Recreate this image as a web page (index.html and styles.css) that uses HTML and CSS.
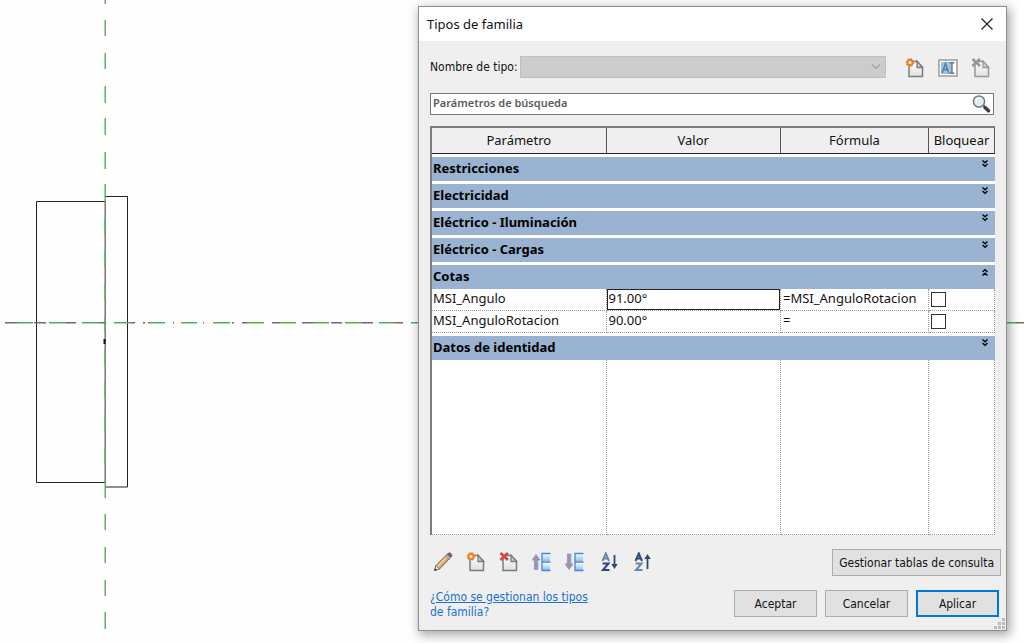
FILE: index.html
```html
<!DOCTYPE html>
<html lang="es">
<head>
<meta charset="utf-8">
<title>Tipos de familia</title>
<link rel="stylesheet" href="styles.css">
</head>
<body>
<svg class="drawing" aria-hidden="true">
  <path class="edge" d="M105 201.500H36.500V482.500H105M105 196.500H127.500V487H105"/>
  <path class="hidden-line" d="M105.200 201V482"/>
  <path class="plane" d="M105.200 0V4M105.200 20V36M105.200 53V69M105.200 86V103M105.200 118V135M105.200 152V169M105.200 184V201M105.200 218V234M105.200 250V267M105.200 283V300M105.200 317V333M105.200 349V366M105.200 382V398M105.200 415V431M105.200 448V464M105.200 481V498M105.200 514V530M105.200 547V563M105.200 580V596M105.200 612V629"/>
  <path class="axis" d="M5 322.800H17M34 322.800H46M66 322.800H76M99 322.800H105M131 322.800H135M143 322.800H145M173 322.800H174M203 322.800H204M232 322.800H234M242 322.800H247M272 322.800H280M302 322.800H313M331 322.800H342M362 322.800H373M395 322.800H403M1016 322.800H1024"/>
  <path class="plane" d="M17 322.800H33M49 322.800H66M82 322.800H99M114 322.800H131M148 322.800H165M181 322.800H197M213 322.800H230M247 322.800H264M280 322.800H296M313 322.800H329M345 322.800H362M379 322.800H395M411 322.800H418M1006 322.800H1016"/>
  <path class="mark" d="M104.500 339V344"/>
</svg>

<svg class="defs" aria-hidden="true">
  <defs>
    <linearGradient id="sheet" x1="0" y1="0" x2="0" y2="1">
      <stop offset="0" stop-color="#ffffff"/><stop offset="1" stop-color="#dcdfe6"/>
    </linearGradient>
    <linearGradient id="cell" x1="0" y1="0" x2="0" y2="1">
      <stop offset="0" stop-color="#f2faff"/><stop offset="1" stop-color="#86c3ea"/>
    </linearGradient>
    <symbol id="page" viewBox="0 0 20 20">
      <path d="M4 3.500H12L17.500 9V18.500H4Z" fill="url(#sheet)" stroke="#7d7d7d" stroke-width="1.500"/>
      <path d="M12 3V9.500H17.500Z" fill="#c9ccd2" stroke="#7d7d7d" stroke-width="1.300"/>
    </symbol>
    <symbol id="chevrons" viewBox="0 0 8 8">
      <path d="M1.500 0.500L4 2.800L6.500 0.500M1.500 4L4 6.300L6.500 4" fill="none" stroke="#000" stroke-width="1.300"/>
    </symbol>
  </defs>
</svg>

<main class="dialog" role="dialog" aria-labelledby="dialog-title">
  <header class="titlebar">
    <h1 id="dialog-title">Tipos de familia</h1>
    <button class="icon-button close" type="button" aria-label="Cerrar">
      <svg width="12" height="12" viewBox="0 0 12 12"><path d="M0.500 0.500L11.500 11.500M11.500 0.500L0.500 11.500" stroke="#222" stroke-width="1.200"/></svg>
    </button>
  </header>

  <div class="content">
    <div class="type-row">
      <label for="type-name">Nombre de tipo:</label>
      <div class="select-wrap">
        <select id="type-name" disabled></select>
        <svg class="select-arrow" width="10" height="6" viewBox="0 0 10 6"><path d="M1 0.500L5 4.500L9 0.500" fill="none" stroke="#a2a2a2" stroke-width="1.200"/></svg>
      </div>
      <div class="type-tools">
        <button class="icon-button" type="button" aria-label="Nuevo tipo">
          <svg width="20" height="20"><use href="#page"/><circle cx="5" cy="4.500" r="2.600" fill="#fff3df" stroke="#e98225" stroke-width="2.200"/><circle cx="5" cy="4.500" r="4" fill="none" stroke="#e98225" stroke-width="1" stroke-dasharray="1.600 1.540"/></svg>
        </button>
        <button class="icon-button" type="button" aria-label="Cambiar nombre de tipo">
          <svg width="20" height="20" viewBox="0 0 20 20"><rect x="1" y="2" width="18" height="16" fill="#fff" stroke="#9a9a9a" stroke-width="1.500"/><rect x="3" y="4" width="11" height="12" fill="#8fc6ea"/><path d="M4 15L7.500 5.500L10.500 15M5.500 11.500H9.500" fill="none" stroke="#62798c" stroke-width="1.400"/><path d="M11.500 4.800H16.500M11.500 15.200H16.500M14 5V15" fill="none" stroke="#777" stroke-width="1.400"/></svg>
        </button>
        <button class="icon-button" type="button" aria-label="Suprimir tipo">
          <svg class="faded" width="20" height="20"><use href="#page"/><path d="M1.500 1L9 8M9 1L1.500 8" stroke="#777" stroke-width="2.600"/></svg>
        </button>
      </div>
    </div>

    <div class="search">
      <input type="search" aria-label="Parámetros de búsqueda" placeholder="Parámetros de búsqueda">
      <button class="icon-button" type="button" aria-label="Buscar">
        <svg width="20" height="20" viewBox="0 0 20 20"><path d="M11 11L14 14" stroke="#666" stroke-width="2"/><path d="M13 13.500L16.500 16.800" stroke="#3c3c3c" stroke-width="3.500" stroke-linecap="round"/><circle cx="7" cy="7.500" r="5.600" fill="#d9eef5" stroke="#777" stroke-width="1.500"/><path d="M4 7A3.500 3.500 0 0 1 7.500 4" fill="none" stroke="#fff" stroke-width="1.500"/></svg>
      </button>
    </div>

    <table class="params">
      <colgroup><col><col><col class="col-formula"><col class="col-lock"></colgroup>
      <thead>
        <tr><th scope="col">Parámetro</th><th scope="col">Valor</th><th scope="col">Fórmula</th><th scope="col">Bloquear</th></tr>
      </thead>
      <tbody>
        <tr class="group"><th colspan="4"><button type="button" aria-expanded="false">Restricciones<svg width="8" height="8"><use href="#chevrons"/></svg></button></th></tr>
        <tr class="group"><th colspan="4"><button type="button" aria-expanded="false">Electricidad<svg width="8" height="8"><use href="#chevrons"/></svg></button></th></tr>
        <tr class="group"><th colspan="4"><button type="button" aria-expanded="false">Eléctrico - Iluminación<svg width="8" height="8"><use href="#chevrons"/></svg></button></th></tr>
        <tr class="group"><th colspan="4"><button type="button" aria-expanded="false">Eléctrico - Cargas<svg width="8" height="8"><use href="#chevrons"/></svg></button></th></tr>
        <tr class="group"><th colspan="4"><button type="button" aria-expanded="true">Cotas<svg class="up" width="8" height="8"><use href="#chevrons"/></svg></button></th></tr>
        <tr class="param">
          <td class="name">MSI_Angulo</td>
          <td><input class="cell active" type="text" value="91.00°" aria-label="Valor de MSI_Angulo"></td>
          <td><input class="cell" type="text" value="=MSI_AnguloRotacion" aria-label="Fórmula de MSI_Angulo"></td>
          <td><input class="lock" type="checkbox" aria-label="Bloquear MSI_Angulo"></td>
        </tr>
        <tr class="param">
          <td class="name">MSI_AnguloRotacion</td>
          <td><input class="cell" type="text" value="90.00°" aria-label="Valor de MSI_AnguloRotacion"></td>
          <td><input class="cell" type="text" value="=" aria-label="Fórmula de MSI_AnguloRotacion"></td>
          <td><input class="lock" type="checkbox" aria-label="Bloquear MSI_AnguloRotacion"></td>
        </tr>
        <tr class="group"><th colspan="4"><button type="button" aria-expanded="false">Datos de identidad<svg width="8" height="8"><use href="#chevrons"/></svg></button></th></tr>
        <tr class="filler"><td></td><td></td><td></td><td></td></tr>
      </tbody>
    </table>

    <div class="tool-row">
      <div class="tools">
        <button class="icon-button" type="button" aria-label="Editar parámetro">
          <svg width="20" height="20" viewBox="0 0 20 20"><path d="M1.500 18.500L3 13.500L14.500 2L18 5L6.500 17Z" fill="#d9a860" stroke="#6c6258"/><path d="M4.500 14.500L15 4" stroke="#f6dca6" stroke-width="1.500"/><path d="M1.500 18.500L3 13.500L6.500 17Z" fill="#f1e4cf" stroke="#777"/><path d="M1.300 18.700L2 16.500L3.800 18Z" fill="#333"/><path d="M12.500 4L14 2.500L17.500 5.500L16 7.500Z" fill="#b9bec5" stroke="#666" stroke-width=".6"/><path d="M14.500 2L16 .8Q18.500 .8 19 3.500L18 5.200Z" fill="#ad5148" stroke="#555" stroke-width=".7"/></svg>
        </button>
        <button class="icon-button" type="button" aria-label="Nuevo parámetro">
          <svg width="20" height="20"><use href="#page"/><circle cx="5" cy="4.500" r="2.600" fill="#fff3df" stroke="#e98225" stroke-width="2.200"/><circle cx="5" cy="4.500" r="4" fill="none" stroke="#e98225" stroke-width="1" stroke-dasharray="1.600 1.540"/></svg>
        </button>
        <button class="icon-button" type="button" aria-label="Suprimir parámetro">
          <svg width="20" height="20"><use href="#page"/><path d="M1.500 1L9 8M9 1L1.500 8" stroke="#cf4a40" stroke-width="2.800"/></svg>
        </button>
        <button class="icon-button" type="button" aria-label="Subir">
          <svg width="20" height="20" viewBox="0 0 20 20"><path d="M4 2.500L8 8H5.800V17.500H2.400V8H.2Z" fill="#999" stroke="#9b8fe0" stroke-width=".9"/><rect x="10" y="2" width="8" height="7" fill="url(#cell)"/><rect x="10" y="11" width="8" height="7" fill="url(#cell)"/><path d="M18.500 1.500H10V18.500H18.500M10 10H18.500" fill="none" stroke="#5583cf" stroke-width="1.300"/></svg>
        </button>
        <button class="icon-button" type="button" aria-label="Bajar">
          <svg width="20" height="20" viewBox="0 0 20 20"><path d="M4 17.500L8 12H5.800V2H2.400V12H.2Z" fill="#999" stroke="#9b8fe0" stroke-width=".9"/><rect x="10" y="2" width="8" height="7" fill="url(#cell)"/><rect x="10" y="11" width="8" height="7" fill="url(#cell)"/><path d="M18.500 1.500H10V18.500H18.500M10 10H18.500" fill="none" stroke="#5583cf" stroke-width="1.300"/></svg>
        </button>
        <button class="icon-button sort" type="button" aria-label="Orden ascendente">
          <svg width="20" height="20" viewBox="0 0 20 20"><path d="M1.500 9L4.800 1.500L8 9M2.500 6.500H7" fill="none" stroke="#6688a8" stroke-width="2"/><path d="M1.500 11.500H7.500L2 18H8.500" fill="none" stroke="#2d4b70" stroke-width="2"/><path d="M13.500 3V15" stroke="#2d4b70" stroke-width="1.800"/><path d="M10.300 12H16.700L13.500 17Z" fill="#2d4b70"/></svg>
        </button>
        <button class="icon-button" type="button" aria-label="Orden descendente">
          <svg width="20" height="20" viewBox="0 0 20 20"><path d="M1.500 9L4.800 1.500L8 9M2.500 6.500H7" fill="none" stroke="#2d4b70" stroke-width="2"/><path d="M1.500 11.500H7.500L2 18H8.500" fill="none" stroke="#6688a8" stroke-width="2"/><path d="M13.500 5V17" stroke="#2d4b70" stroke-width="1.800"/><path d="M10.300 7H16.700L13.500 2Z" fill="#2d4b70"/></svg>
        </button>
      </div>
      <button class="button wide" type="button">Gestionar tablas de consulta</button>
    </div>

    <footer class="footer">
      <a class="help" href="#ayuda">¿Cómo se gestionan los tipos<br><span>de familia?</span></a>
      <div class="actions">
        <button class="button" type="button">Aceptar</button>
        <button class="button" type="button">Cancelar</button>
        <button class="button primary" type="button">Aplicar</button>
      </div>
    </footer>
  </div>
  <svg class="grip" width="11" height="11" viewBox="0 0 11 11"><path d="M8 0h3v3H8zM4 4h3v3H4zM8 4h3v3H8zM0 8h3v3H0zM4 8h3v3H4zM8 8h3v3H8z" fill="#bcbcbc"/></svg>
</main>
</body>
</html>
```
FILE: styles.css
```css
* { box-sizing: border-box; }

body {
  margin: 0;
  min-height: 100vh;
  padding: 6px 17px 12px 418px;
  background: #fefefe;
  color: #111;
  font-family: "DejaVu Sans Condensed", "Noto Sans", sans-serif;
  font-size: 12px;
  line-height: 16px;
}

button, input, select { font: inherit; color: inherit; }

.drawing {
  position: absolute;
  top: 0;
  left: 0;
  width: 100%;
  height: 100%;
}
.drawing path { fill: none; }
.drawing .edge { stroke: #222; stroke-width: 1; }
.drawing .hidden-line { stroke: #6e6a6c; stroke-width: 1.4; }
.drawing .plane { stroke: #55ab58; stroke-width: 1.4; }
.drawing .axis { stroke: #6e6a6c; stroke-width: 1.4; }
.drawing .mark { stroke: #111; stroke-width: 2; }

.defs { position: absolute; width: 0; height: 0; }

.dialog {
  position: relative;
  border: 1px solid #8e8e8e;
  background: #efefef;
  box-shadow: 2px 3px 10px 1px rgba(0, 0, 0, 0.35);
}

.titlebar {
  display: flex;
  align-items: center;
  justify-content: space-between;
  height: 34px;
  padding: 0 13px 1px 8px;
  background: #fff;
}
.titlebar h1 {
  margin: 0;
  font-family: "Noto Sans", "Open Sans", sans-serif;
  font-size: 13px;
  font-weight: 400;
}

.icon-button {
  display: grid;
  place-items: center;
  padding: 0;
  border: 0;
  background: none;
}
.icon-button svg { display: block; }
.faded { opacity: 0.75; }

.content { padding: 15px 12px 10px 11px; }

.type-row {
  display: flex;
  align-items: center;
  gap: 2px;
}
.select-wrap {
  position: relative;
  flex: 1;
  height: 22px;
}
.select-wrap select {
  appearance: none;
  display: block;
  width: 100%;
  height: 22px;
  border: 1px solid #bfbfbf;
  border-radius: 0;
  background: #cccccc;
  opacity: 1;
}
.select-arrow {
  position: absolute;
  top: 8px;
  right: 5px;
}
.type-tools {
  display: flex;
  gap: 13px;
  padding: 2px 3px 0 17px;
}

.search {
  display: flex;
  align-items: center;
  height: 22px;
  margin-top: 15px;
  padding-right: 1px;
  border: 1px solid #777;
  background: #fff;
}
.search input {
  flex: 1;
  min-width: 0;
  height: 20px;
  padding: 0 2px 3px;
  border: 0;
  outline: 0;
  background: none;
  font-family: "Noto Sans", "Open Sans", sans-serif;
  font-size: 11px;
  font-weight: 600;
}
.search input::placeholder { color: #5c5c5c; opacity: 1; }

.params {
  width: calc(100% + 1px);
  margin-top: 11px;
  table-layout: fixed;
  border-spacing: 0;
  border-top: 2px solid #7d7d7d;
  border-left: 2px solid #7d7d7d;
  background: #fff;
  font-family: "Noto Sans", "Open Sans", sans-serif;
  font-size: 13px;
}
.col-formula { width: 148px; }
.col-lock { width: 66px; }
.params th, .params td { padding: 0; }
.params thead th {
  height: 26px;
  padding-bottom: 1px;
  border-right: 1px solid #555;
  border-bottom: 1px solid #222;
  background: #efefef;
  font-weight: 400;
}
.group th {
  height: 27px;
  border-top: 3px solid #fff;
  background: #99b3d1;
  background-clip: padding-box;
}
.group button {
  display: flex;
  justify-content: space-between;
  width: 100%;
  height: 24px;
  padding: 3px 6px 5px 1px;
  border: 0;
  background: none;
  color: #000;
  font-weight: 700;
  line-height: 16px;
  text-align: left;
}
.up { transform: rotate(180deg); }

.param td {
  height: 22px;
  border-right: 1px dotted #999;
  border-bottom: 1px dotted #999;
}
.param .name { padding: 0 0 3px 1px; line-height: 16px; }
.cell {
  display: block;
  width: 100%;
  height: 21px;
  padding: 0 2px 3px;
  border: 0;
  outline: 0;
  background: none;
}
.cell.active {
  padding: 0 1px 3px;
  border: 1px solid #222;
}
.lock {
  appearance: none;
  display: block;
  width: 15px;
  height: 15px;
  margin: 0 0 0 2px;
  border: 1px solid #333;
  background: #fff;
}
.filler td {
  height: 175px;
  border-right: 1px dotted #999;
  border-bottom: 1px dotted #999;
}

.tool-row, .footer {
  display: flex;
  align-items: center;
  justify-content: space-between;
}
.tool-row {
  margin: 14px -7px 0 0;
}
.tools {
  display: flex;
  gap: 13px;
  padding: 0 0 2px 3px;
}
.sort { margin-left: 3px; }

.button {
  height: 27px;
  min-width: 83px;
  padding: 0 8px;
  border: 1px solid #adadad;
  background: #e1e1e1;
}
.button.wide { padding: 0 6px; }
.button.primary { border: 2px solid #0078d7; }

.footer {
  align-items: flex-start;
  margin: 14px -5px 0 0;
}
.help {
  color: #1a6fd0;
  line-height: 15px;
}
.help span { display: inline-block; }
.actions {
  display: flex;
  gap: 8px;
}

.grip {
  position: absolute;
  right: 1px;
  bottom: 1px;
}
```
